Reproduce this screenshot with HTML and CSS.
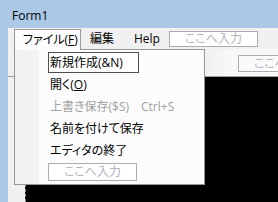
FILE: index.html
```html
<!DOCTYPE html>
<html>
<head>
<meta charset="utf-8">
<link rel="stylesheet" href="styles.css">
</head>
<body>
<div class="window">
  <div class="titlebar"><span class="title">Form1</span></div>
  <div class="frame">
    <div class="frame-left"></div>
    <div class="client">
      <div class="menubar">
        <div class="mi mi-file">ファイル(<u>F</u>)</div>
        <div class="mi mi-edit">編集</div>
        <div class="mi mi-help">Help</div>
        <div class="typehere mb-box">ここへ入力</div>
      </div>
      <div class="toolstrip">
        <div class="typehere ts-box">ここへ入力</div>
      </div>
      <div class="work">
        <div class="panel"></div>
      </div>
      <div class="dropdown">
        <div class="row"><div class="editbox">新規作成(&amp;N)</div></div>
        <div class="row"><span class="label">開く(<u>O</u>)</span></div>
        <div class="row disabled"><span class="label">上書き保存($S)</span><span class="shortcut">Ctrl+S</span></div>
        <div class="row"><span class="label">名前を付けて保存</span></div>
        <div class="row"><span class="label">エディタの終了</span></div>
        <div class="row"><div class="typehere dd-box">ここへ入力</div></div>
      </div>
    </div>
  </div>
</div>
</body>
</html>
```
FILE: styles.css
```css
html, body {
  margin: 0;
  padding: 0;
}
body {
  width: 278px;
  height: 202px;
  overflow: hidden;
  font-family: "Open Sans", "Noto Sans CJK JP", sans-serif;
  font-size: 12px;
  color: #000;
  font-feature-settings: "palt";
}
.window {
  display: flex;
  flex-direction: column;
  height: 202px;
}
.titlebar {
  height: 28px;
  background: #abc8e7;
  display: flex;
  align-items: center;
  padding-left: 12px;
  box-sizing: border-box;
  flex: none;
}
.title {
  font-size: 12px;
  line-height: 16px;
  margin-top: 3px;
}
.frame {
  flex: 1;
  display: flex;
  min-height: 0;
}
.frame-left {
  width: 8px;
  background: #abc8e7;
  flex: none;
}
.client {
  flex: 1;
  position: relative;
  background: #f0f0f0;
  display: flex;
  flex-direction: column;
  min-width: 0;
}
.menubar {
  height: 21px;
  display: flex;
  align-items: flex-start;
  flex: none;
  padding-left: 6px;
  white-space: nowrap;
}
.mi {
  height: 21px;
  line-height: 20px;
  box-sizing: border-box;
  margin-top: 1px;
}
.mi-file {
  position: relative;
  z-index: 2;
  width: 67px;
  padding-left: 8px;
  border: 1px solid #999;
  border-bottom: none;
  background: #fcfcfc;
}
.mi-edit {
  width: 43px;
  padding-left: 9px;
}
.mi-help {
  width: 45px;
  padding-left: 10px;
}
.typehere {
  box-sizing: border-box;
  border: 1px solid #acacac;
  color: #b3b3c3;
  text-align: center;
  background: #fff;
  white-space: nowrap;
  overflow: hidden;
}
.mb-box {
  width: 89px;
  height: 16px;
  line-height: 14px;
  margin-top: 3px;
}
.toolstrip {
  height: 28px;
  flex: none;
  box-sizing: border-box;
  border-bottom: 1px solid #a0a0a0;
  background: linear-gradient(to right, #f0f0f0 196px, #f8f8f8 222px);
  padding: 6px 0 0 230px;
  overflow: hidden;
}
.ts-box {
  width: 89px;
  height: 17px;
  line-height: 15px;
  background: #fafafa;
}
.work {
  flex: 1;
  padding-left: 17px;
  display: flex;
}
.panel {
  flex: 1;
  background: #000;
  border-left: 1px dashed #8a8a8a;
}
.dropdown {
  position: absolute;
  z-index: 1;
  left: 6px;
  top: 21px;
  width: 191px;
  height: 136px;
  box-sizing: border-box;
  border: 1px solid #979797;
  background: linear-gradient(to right, #f1f1f1 0, #f4f4f4 23px, #fcfcfc 24px);
  padding-top: 1px;
}
.row {
  height: 22px;
  display: flex;
  align-items: center;
  padding-left: 35px;
  white-space: nowrap;
}
.label {
  width: 91px;
  flex: none;
}
.disabled {
  color: #a0a0a0;
}
.shortcut {
  color: #a0a0a0;
}
.editbox {
  box-sizing: border-box;
  width: 91px;
  height: 21px;
  line-height: 19px;
  border: 1px solid #505050;
  background: #fff;
  margin-left: -2px;
  padding-left: 1px;
  align-self: flex-start;
  margin-top: 1px;
}
.dd-box {
  width: 89px;
  height: 18px;
  line-height: 16px;
  margin-left: -2px;
}
```
